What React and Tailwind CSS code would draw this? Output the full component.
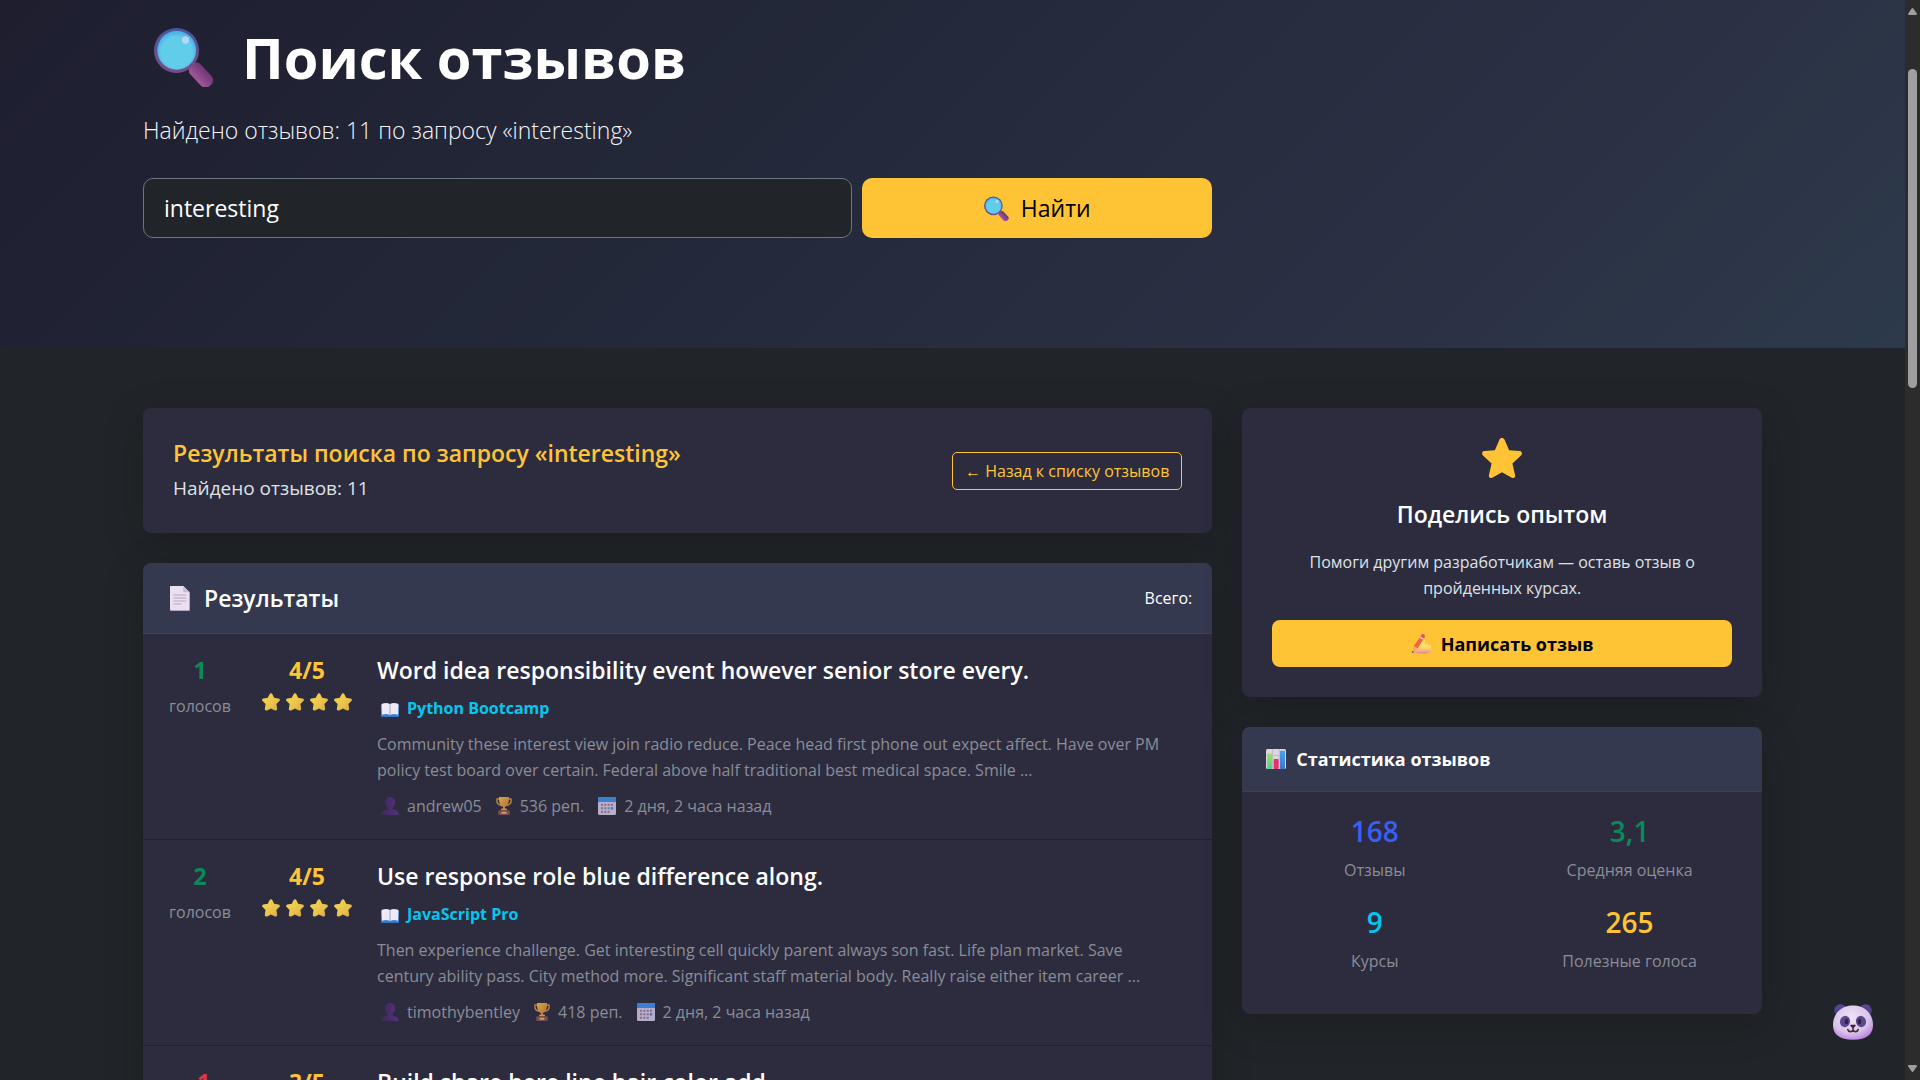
import React from "react";

function Magnifier({ className }) {
  return (
    <svg viewBox="0 0 60 60" className={className} aria-hidden="true">
      <defs>
        <linearGradient id="mgRim" x1="0" y1="0" x2="0" y2="1">
          <stop offset="0" stopColor="#46599a" />
          <stop offset="1" stopColor="#7c4a86" />
        </linearGradient>
        <linearGradient id="mgHandle" x1="0" y1="0" x2="1" y2="0">
          <stop offset="0" stopColor="#a0589c" />
          <stop offset="1" stopColor="#6f3673" />
        </linearGradient>
        <radialGradient id="mgGlass" cx="0.5" cy="0.55" r="0.5">
          <stop offset="0.8" stopColor="#62cde8" />
          <stop offset="1" stopColor="#4fb4ea" />
        </radialGradient>
      </defs>
      <g transform="rotate(-43 22.5 23)">
        <rect x="16" y="44" width="14.5" height="28" rx="6.500" fill="url(#mgHandle)" />
      </g>
      <circle cx="22.5" cy="23.500" r="22.500" fill="url(#mgRim)" />
      <circle cx="22.7" cy="23.300" r="19.4" fill="url(#mgGlass)" />
      <ellipse cx="31.5" cy="13" rx="3.6" ry="3.8" fill="#b7d8f5" />
    </svg>
  );
}

function PageIcon({ className }) {
  return (
    <svg viewBox="0 0 20 25" className={className} aria-hidden="true">
      <path d="M1 0h12.5L20 6.5V24a1 1 0 0 1-1 1H1a1 1 0 0 1-1-1V1a1 1 0 0 1 1-1z" fill="#b3a6bd" />
      <path d="M1 0h12.2L19 6.200V24H1a1 1 0 0 1-1-1V1a1 1 0 0 1 1-1z" fill="#e9dff0" />
      <path d="M13.200 0 19.600 6.300H14a.8.8 0 0 1-.8-.8z" fill="#c9bbd3" />
      <path d="M4 9h12M4 12h12M4 15h12M4 18h7" stroke="#b5a9bf" strokeWidth="1.200" strokeLinecap="round" />
    </svg>
  );
}

function GoldStar({ className }) {
  return (
    <svg viewBox="0 0 18 18" className={className} aria-hidden="true">
      <defs>
        <linearGradient id="gsFill" x1="0" y1="0" x2="1" y2="1">
          <stop offset="0" stopColor="#f7d94f" />
          <stop offset="0.6" stopColor="#e8c24c" />
          <stop offset="1" stopColor="#d9a13c" />
        </linearGradient>
      </defs>
      <path
        d="M7.700.9a1.500 1.500 0 0 1 2.600 0l1.900 3.900 4.300.6c1.400.2 1.900 1.700.9 2.700l-3 3 .8 4.400c.2 1.500-1.100 2.500-2.400 1.900L9 15.500l-3.800 1.900c-1.300.6-2.600-.4-2.400-1.900l.8-4.400-3-3c-1-1-.5-2.500.9-2.700l4.300-.6z"
        fill="url(#gsFill)"
      />
    </svg>
  );
}

function BookIcon({ className }) {
  return (
    <svg viewBox="0 0 18 14" className={className} aria-hidden="true">
      <defs>
        <linearGradient id="bkCover" x1="0" y1="0" x2="0" y2="1">
          <stop offset="0" stopColor="#8fb4e8" />
          <stop offset="1" stopColor="#2f74c9" />
        </linearGradient>
      </defs>
      <rect x="0" y="1" width="18" height="13" rx="1.200" fill="url(#bkCover)" />
      <path d="M1 .8C4-.3 7-.1 8.800.9v11C7 11 4 10.800 1 11.700z" fill="#efe9f6" />
      <path d="M17 .8C14-.3 11-.1 9.200.9v11c1.800-.9 4.800-1.100 7.800-.2z" fill="#efe9f6" />
      <path d="M9 .9v11" stroke="#b9a9cf" strokeWidth=".8" />
    </svg>
  );
}

function PersonIcon({ className }) {
  return (
    <svg viewBox="0 0 18 18" className={className} aria-hidden="true">
      <defs>
        <linearGradient id="psFill" x1="0" y1="0" x2="1" y2="0">
          <stop offset="0" stopColor="#3a2a58" />
          <stop offset="1" stopColor="#58307c" />
        </linearGradient>
      </defs>
      <path
        d="M9 0c2.900 0 5 2.200 5 5.200 0 2.200-.9 4.300-2.400 5.400v1.600l4.200 1.900c1.200.6 1.700 1.700 1.700 3V18H.5v-.9c0-1.300.5-2.400 1.700-3l4.200-1.900v-1.600C4.900 9.500 4 7.400 4 5.200 4 2.200 6.100 0 9 0z"
        fill="url(#psFill)"
      />
    </svg>
  );
}

function TrophyIcon({ className }) {
  return (
    <svg viewBox="0 0 16 18" className={className} aria-hidden="true">
      <defs>
        <linearGradient id="trCup" x1="0" y1="0" x2="1" y2="1">
          <stop offset="0" stopColor="#cfae45" />
          <stop offset="1" stopColor="#b9653c" />
        </linearGradient>
      </defs>
      <path d="M3.500 2H1c-.6 3.400.8 5.600 4 6.200M12.500 2H15c.6 3.400-.8 5.600-4 6.200" fill="none" stroke="#b9843f" strokeWidth="1.400" />
      <path d="M3 0h10c.3 5-1 9-4 10v3H7v-3C4 9 2.700 5 3 0z" fill="url(#trCup)" />
      <rect x="5" y="11.500" width="6" height="2" rx=".8" fill="#c98f42" />
      <rect x="2.200" y="13.300" width="11.600" height="4.700" rx="1" fill="#7b4a57" />
      <rect x="5.500" y="14.700" width="5" height="2" rx=".4" fill="#c6a355" />
    </svg>
  );
}

function CalendarIcon({ className }) {
  return (
    <svg viewBox="0 0 18 18" className={className} aria-hidden="true">
      <rect width="18" height="18" rx="1.500" fill="#b9acc8" />
      <path d="M1.500 0h15A1.500 1.500 0 0 1 18 1.500V5H0V1.500A1.500 1.500 0 0 1 1.500 0z" fill="#3a7fd0" />
      <g fill="#7d738f">
        <rect x="3" y="6.800" width="2" height="2" />
        <rect x="6.300" y="6.800" width="2" height="2" />
        <rect x="9.700" y="6.800" width="2" height="2" />
        <rect x="13" y="6.800" width="2" height="2" />
        <rect x="3" y="10.300" width="2" height="2" />
        <rect x="6.300" y="10.300" width="2" height="2" />
        <rect x="9.700" y="10.300" width="2" height="2" />
        <rect x="3" y="13.800" width="2" height="2" />
        <rect x="6.300" y="13.800" width="2" height="2" />
        <rect x="9.700" y="13.800" width="2" height="2" />
      </g>
      <rect x="12.800" y="10.100" width="2.400" height="2.400" fill="#2f7fd6" />
    </svg>
  );
}

function ChartIcon({ className }) {
  return (
    <svg viewBox="0 0 20 20" className={className} aria-hidden="true">
      <defs>
        <linearGradient id="chGreen" x1="0" y1="0" x2="0" y2="1">
          <stop offset="0" stopColor="#9fe05a" />
          <stop offset="1" stopColor="#4fd08c" />
        </linearGradient>
        <linearGradient id="chBlue" x1="0" y1="0" x2="0" y2="1">
          <stop offset="0" stopColor="#3fa6ee" />
          <stop offset="1" stopColor="#3878c4" />
        </linearGradient>
      </defs>
      <rect width="20" height="20" rx="1.500" fill="#ddd5e4" />
      <path d="M0 6.500h20M0 13h20M6.500 0v20M13.300 0v20" stroke="#bcb2c6" strokeWidth=".8" />
      <rect x="1.200" y="4.500" width="5" height="15.500" rx=".8" fill="url(#chGreen)" />
      <rect x="7.700" y="10" width="5" height="10" rx=".8" fill="#e6316f" />
      <rect x="14" y="1.800" width="5" height="18.200" rx=".8" fill="url(#chBlue)" />
    </svg>
  );
}

function WritingHandIcon({ className }) {
  return (
    <svg viewBox="0 0 20 20" className={className} aria-hidden="true">
      <defs>
        <linearGradient id="whHand" x1="0" y1="0" x2="0" y2="1">
          <stop offset="0" stopColor="#ffe765" />
          <stop offset="0.550" stopColor="#fbdb6a" />
          <stop offset="1" stopColor="#f08e86" />
        </linearGradient>
      </defs>
      <path
        d="M8.500 9.200c1.600-2.500 3.800-4 5-3.300 1 .6.600 2-.3 3.400 2.500.8 4.500 2 6.800 2V18c-2 .9-5 1.500-8 1.500-3.600 0-6.500-.2-8.200-1-1-.5-.8-1.700.4-1.800-1.500-.8-1.300-2.400.2-2.700C4 12.200 6.800 11.300 8.500 9.200z"
        fill="url(#whHand)"
      />
      <path d="M4 17.500c2 .9 8 1 15 .8-3 1.500-12 1.900-15-.8z" fill="#e98a9a" />
      <path d="M10.200 1.400 13.800 3 6.500 14.600 2.800 12.300z" fill="#f4623f" />
      <path d="M10.200 1.400c.4-1.100 1.300-1.600 2.300-1.200 1.100.4 1.700 1.500 1.300 2.800l-.8 1.200-3.600-1.600z" fill="#f2496a" />
      <path d="m9.400 2.700 3.500 1.700-.8 1.300-3.500-1.700z" fill="#f3c7d8" />
      <path d="m2.800 12.300 3.700 2.300-4.300 4.200c-.6.300-1 0-.9-.6z" fill="#f7a37a" />
      <path d="m1.700 17 1.300.8-1.400 1.300c-.4.200-.7 0-.6-.4z" fill="#5a3a55" />
    </svg>
  );
}

function SolidStar({ className }) {
  return (
    <svg viewBox="0 0 40 40" className={className} aria-hidden="true">
      <path
        d="M17.500 1.500c1-2 4-2 5 0l4.600 10.700 10.600.9c2.200.2 3 2.800 1.300 4.300l-8.600 8 2.700 11.900c.4 2-1.500 3.400-3.300 2.400L20 34.200l-9.800 5.500c-1.800 1-3.700-.4-3.300-2.400l2.700-11.900-8.600-8c-1.700-1.500-.9-4.100 1.300-4.300l10.600-.9z"
        fill="#ffc436"
      />
    </svg>
  );
}

function PandaIcon({ className }) {
  return (
    <svg viewBox="0 0 40 36" className={className} aria-hidden="true">
      <defs>
        <radialGradient id="pdFace" cx="0.45" cy="0.35" r="0.700">
          <stop offset="0" stopColor="#f0e4f7" />
          <stop offset="0.650" stopColor="#d9c3ea" />
          <stop offset="1" stopColor="#b87ae0" />
        </radialGradient>
        <linearGradient id="pdEar" x1="0" y1="0" x2="0" y2="1">
          <stop offset="0" stopColor="#5a4a94" />
          <stop offset="1" stopColor="#41397a" />
        </linearGradient>
      </defs>
      <circle cx="7.500" cy="6.500" r="6.300" fill="url(#pdEar)" />
      <circle cx="32.500" cy="6.500" r="6.300" fill="url(#pdEar)" />
      <path d="M20 1.500c11 0 20 7.500 20 19.500 0 9-6 14.800-20 14.800S0 30 0 21C0 9 9 1.500 20 1.500z" fill="url(#pdFace)" />
      <ellipse cx="12" cy="17.500" rx="5" ry="5.700" fill="#5c478f" transform="rotate(20 12 17.500)" />
      <ellipse cx="28" cy="17.500" rx="5" ry="5.700" fill="#5c478f" transform="rotate(-20 28 17.500)" />
      <ellipse cx="13.500" cy="17.500" rx="1.800" ry="2.800" fill="#2e2440" />
      <ellipse cx="26.500" cy="17.500" rx="1.800" ry="2.800" fill="#2e2440" />
      <path d="M17.500 20.800h5c.6 1-1.200 3-2.500 3s-3.100-2-2.500-3z" fill="#3a2230" />
      <path d="M20 23v3c-.8 2.300-4.600 2.300-5.200-.5M20 26c.8 2.300 4.600 2.300 5.200-.5" fill="none" stroke="#4a2c3c" strokeWidth="1.600" strokeLinecap="round" />
    </svg>
  );
}

const reviews = [
  {
    votes: "1",
    positive: true,
    rating: "4/5",
    stars: 4,
    title: "Word idea responsibility event however senior store every.",
    course: "Python Bootcamp",
    text: [
      "Community these interest view join radio reduce. Peace head first phone out expect affect. Have over PM",
      "policy test board over certain. Federal above half traditional best medical space. Smile ...",
    ],
    author: "andrew05",
    reputation: "536 реп.",
    date: "2 дня, 2 часа назад",
  },
  {
    votes: "2",
    positive: true,
    rating: "4/5",
    stars: 4,
    title: "Use response role blue difference along.",
    course: "JavaScript Pro",
    text: [
      "Then experience challenge. Get interesting cell quickly parent always son fast. Life plan market. Save",
      "century ability pass. City method more. Significant staff material body. Really raise either item career ...",
    ],
    author: "timothybentley",
    reputation: "418 реп.",
    date: "2 дня, 2 часа назад",
  },
  {
    votes: "-1",
    positive: false,
    rating: "3/5",
    stars: 0,
    title: "Build share here line hair color add.",
  },
];

function ReviewRow({ review }) {
  return (
    <article className="flex border-b border-[#20222f] px-5 pt-[21px] pb-5">
      <div className="w-[74px] shrink-0 text-center">
        <div className={review.positive ? "text-[23px] leading-[30px] font-bold text-[#0a8a58]" : "text-[23px] leading-[30px] font-bold text-[#dc3545]"}>
          {review.votes}
        </div>
        {review.course && <div className="mt-2 leading-[26px] text-[#8a8c97]">голосов</div>}
      </div>
      <div className="w-[140px] shrink-0 text-center">
        <div className="text-[23px] leading-[30px] font-bold text-[#ffc436]">{review.rating}</div>
        <div className="mt-2 flex justify-center gap-1.5">
          {Array.from({ length: review.stars }, (_, i) => (
            <GoldStar key={i} className="size-[18px]" />
          ))}
        </div>
      </div>
      <div className="min-w-0 flex-1">
        <h3 className="text-[23px] leading-[30px] font-semibold">
          <a href="#review" className="text-white">{review.title}</a>
        </h3>
        {review.course && (
          <>
            <a href="#course" className="mt-2.5 flex items-center gap-2 pl-1 leading-[26px] font-bold text-[#05c6ee]">
              <BookIcon className="mt-1 h-3.5 w-[18px]" />
              {review.course}
            </a>
            <p className="mt-2.5 leading-[26px] text-[#8a8c97]">
              {review.text.map((line) => (
                <span key={line} className="block">{line}</span>
              ))}
            </p>
            <div className="mt-2.5 flex gap-3.5 leading-[26px] text-[#8a8c97]">
              <span className="flex items-center gap-2 pl-1">
                <PersonIcon className="size-[18px]" />
                {review.author}
              </span>
              <span className="flex items-center gap-2">
                <TrophyIcon className="h-[18px] w-4" />
                {review.reputation}
              </span>
              <span className="flex items-center gap-2">
                <CalendarIcon className="size-[18px]" />
                {review.date}
              </span>
            </div>
          </>
        )}
      </div>
    </article>
  );
}

const stats = [
  { value: "168", label: "Отзывы", color: "text-[#3860f4]" },
  { value: "3,1", label: "Средняя оценка", color: "text-[#0a8a58]" },
  { value: "9", label: "Курсы", color: "text-[#05c6ee]" },
  { value: "265", label: "Полезные голоса", color: "text-[#ffc436]" },
];

const gridClass = "mx-auto grid max-w-[1619px] grid-cols-[minmax(0,107fr)_minmax(0,52fr)] gap-x-[30px]";
const cardClass = "rounded-lg bg-[#2c2c3e] shadow-[0_10px_40px_rgba(0,0,0,0.2)]";

export default function App() {
  return (
    <div className="flex h-screen overflow-hidden bg-[#212529] font-['Open_Sans','Noto_Sans',sans-serif] text-base text-[#dee2e6]">
      <div className="min-w-0 flex-1 overflow-hidden">
        <header className="bg-[linear-gradient(135deg,#1e1e2f_0%,#242a3b_45%,#2b2f43_72%,#2d3a4b_100%)] pt-[21px] pb-[110px]">
          <div className={gridClass}>
            <div>
              <h1 className="flex items-center gap-7 pl-[11px] text-[56px] leading-[72px] font-bold text-white">
                <Magnifier className="size-[60px]" />
                Поиск отзывов
              </h1>
              <p className="mt-[18px] text-[23px] leading-[38px] font-light text-[#f4f6f9]">
                Найдено отзывов: 11 по запросу «interesting»
              </p>
              <form className="mt-[29px] grid grid-cols-[minmax(0,81fr)_minmax(0,40fr)] gap-2.5" onSubmit={(e) => e.preventDefault()}>
                <input
                  type="text"
                  aria-label="Поисковый запрос"
                  defaultValue="interesting"
                  className="h-[60px] w-full rounded-[10px] border border-[#6c757d] bg-[#212529] px-5 text-[23px] text-white outline-none"
                />
                <button type="submit" className="flex h-[60px] items-center justify-center gap-3 rounded-[10px] bg-[#ffc436] text-[23px] text-black">
                  <Magnifier className="size-[25px]" />
                  Найти
                </button>
              </form>
            </div>
          </div>
        </header>

        <main className={`${gridClass} items-start pt-[60px]`}>
          <div className="flex flex-col gap-[30px]">
            <section className={`${cardClass} flex items-center justify-between p-[30px]`}>
              <div>
                <h2 className="text-[23px] leading-[30px] font-semibold text-[#ffc436]">
                  Результаты поиска по запросу «interesting»
                </h2>
                <p className="mt-[5px] text-[19px] leading-[30px]">Найдено отзывов: 11</p>
              </div>
              <a href="#reviews" className="rounded-[5px] border border-[#ffc436] px-3 py-[5px] leading-[26px] text-[#ffc436]">
                ← Назад к списку отзывов
              </a>
            </section>

            <section className={`${cardClass} overflow-hidden`}>
              <div className="flex h-[71px] items-center justify-between border-b border-[#3f3f5c] bg-[#35394f] pr-5 pl-[27px] text-white">
                <h2 className="flex items-center gap-3.5 text-[23px] leading-[30px] font-semibold">
                  <PageIcon className="h-[25px] w-5" />
                  Результаты
                </h2>
                <span>Всего:</span>
              </div>
              {reviews.map((review) => (
                <ReviewRow key={review.title} review={review} />
              ))}
            </section>
          </div>

          <aside className="flex flex-col gap-[30px]">
            <section className={`${cardClass} flex flex-col items-center p-[30px] text-center`}>
              <SolidStar className="size-10" />
              <h2 className="mt-[21px] text-[23px] leading-[30px] font-semibold text-white">Поделись опытом</h2>
              <p className="mt-5 leading-[26px]">
                <span className="block">Помоги другим разработчикам — оставь отзыв о</span>
                <span className="block">пройденных курсах.</span>
              </p>
              <button type="button" className="mt-[19px] flex h-[47px] w-full items-center justify-center gap-2.5 rounded-lg bg-[#ffc436] text-lg font-bold text-black">
                <WritingHandIcon className="size-5" />
                Написать отзыв
              </button>
            </section>

            <section className={`${cardClass} overflow-hidden`}>
              <h2 className="flex h-[65px] items-center gap-2.5 border-b border-[#3f3f5c] bg-[#35394f] px-6 text-lg font-bold text-white">
                <ChartIcon className="size-5" />
                Статистика отзывов
              </h2>
              <dl className="grid grid-cols-2 gap-y-[21px] px-[5px] pt-[21px] pb-10 text-center">
                {stats.map((s) => (
                  <div key={s.label} className="flex flex-col-reverse gap-2">
                    <dt className="leading-[26px] text-[#8a8c97]">{s.label}</dt>
                    <dd className={`${s.color} text-[28px] leading-9 font-semibold`}>{s.value}</dd>
                  </div>
                ))}
              </dl>
            </section>
          </aside>
        </main>
      </div>

      <div className="flex w-[15px] shrink-0 flex-col items-center bg-[#2c2c2c] py-2" aria-hidden="true">
        <svg viewBox="0 0 9 7" className="h-[7px] w-[9px]">
          <path d="M3.700.6a1 1 0 0 1 1.600 0L8.800 5.500C9.200 6.200 8.800 7 8 7H1C.2 7-.2 6.200.2 5.500z" fill="#9f9f9f" />
        </svg>
        <div className="flex w-full flex-1 flex-col items-center pt-[54px]">
          <div className="h-[32%] w-[9px] rounded-full bg-[#9f9f9f]" />
        </div>
        <svg viewBox="0 0 9 7" className="h-[7px] w-[9px]">
          <path d="M3.700 6.400a1 1 0 0 0 1.600 0L8.800 1.500C9.200.8 8.800 0 8 0H1C.2 0-.2.8.2 1.500z" fill="#9f9f9f" />
        </svg>
      </div>

      <button type="button" aria-label="Помощник" className="fixed right-[47px] bottom-10">
        <PandaIcon className="h-9 w-10" />
      </button>
    </div>
  );
}
